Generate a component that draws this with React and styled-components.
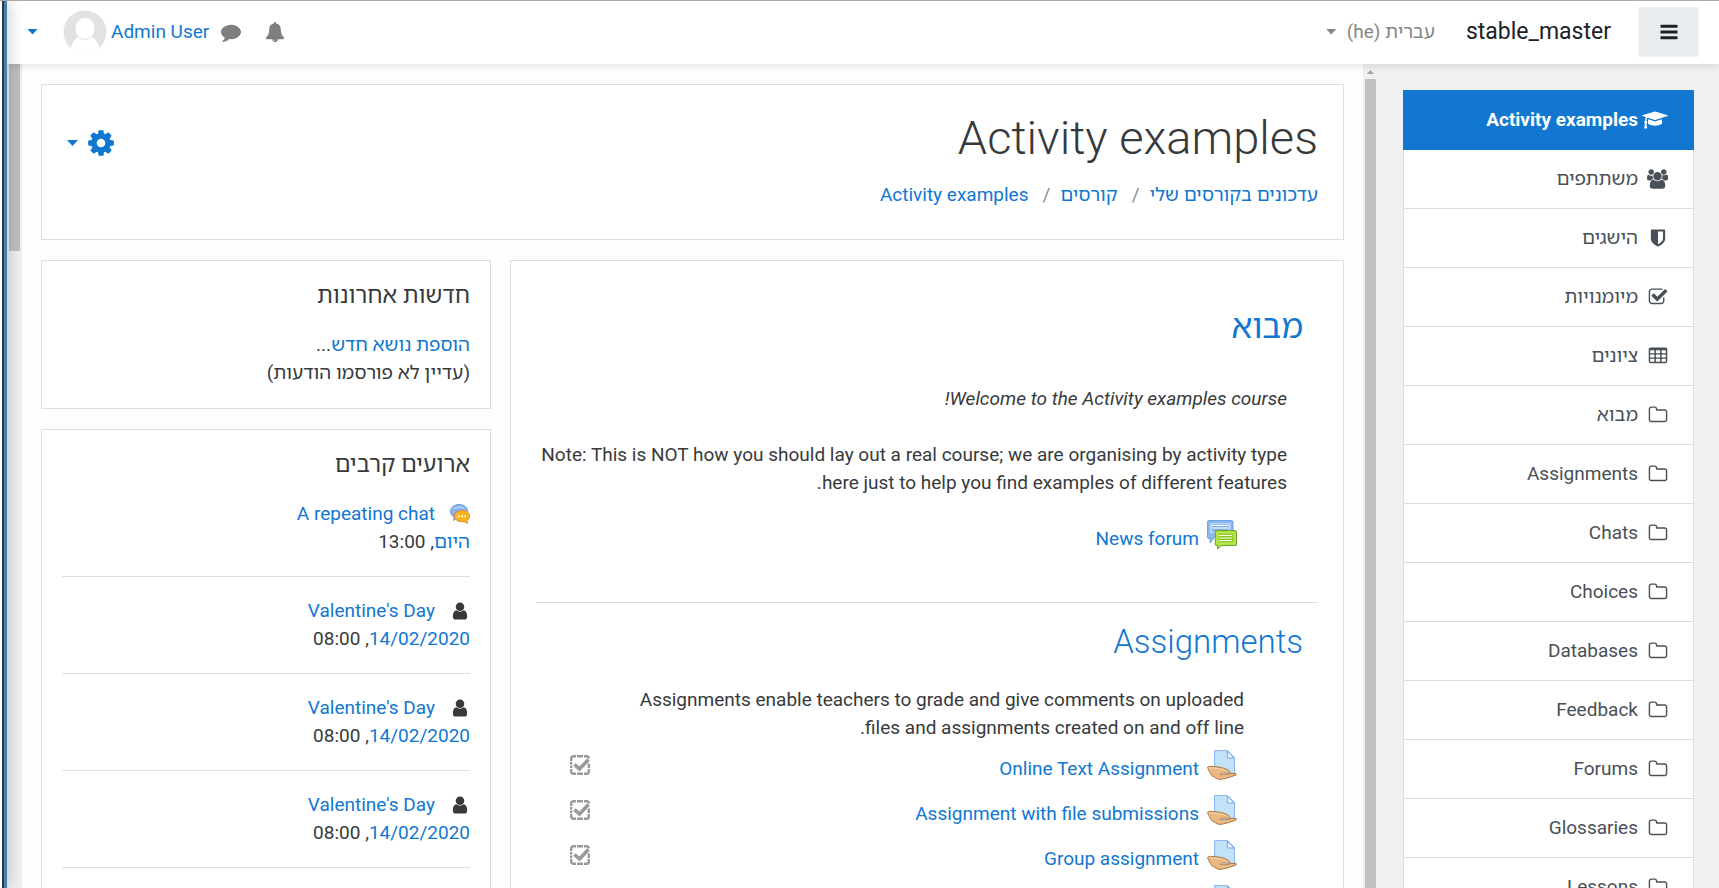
import React from "react";
import styled, { createGlobalStyle } from "styled-components";

const BLUE = "#1177d1";
const LINE = "#dddddd";

const GlobalStyle = createGlobalStyle`
  *, *::before, *::after { box-sizing: border-box; }
  body {
    margin: 0;
    background: #fefefe;
    color: #373a3c;
    font-family: Roboto, "Noto Sans", "Noto Sans Hebrew", "Liberation Sans", sans-serif;
    font-size: 19px;
    line-height: 28px;
  }
  h1, h2, h3, p, ul, ol { margin: 0; padding: 0; }
  ul, ol { list-style: none; }
  a { color: ${BLUE}; text-decoration: none; }
  button {
    border: 0;
    padding: 0;
    background: none;
    color: inherit;
    font: inherit;
    cursor: pointer;
  }
  svg { display: block; flex: none; }
`;

/* ---------- window shell ---------- */

const Window = styled.div`
  display: flex;
  height: 100vh;
  overflow: hidden;
  border-top: 1px solid #a9a9a9;
`;

const WindowEdge = styled.div`
  flex: none;
  width: 7px;
  z-index: 3;
  border-left: 2px solid #ffffff;
  border-right: 3px solid #4682b0;
  background: #35383a;
  box-shadow: 0 0 16px rgba(0, 0, 0, 0.35);
`;

const Page = styled.div`
  flex: 1;
  min-width: 0;
  display: flex;
  flex-direction: column;
`;

const Columns = styled.div`
  flex: 1;
  min-height: 0;
  display: flex;
`;

const ScrollTrack = styled.div`
  flex: none;
  width: 15px;
  padding: ${(p) => (p.$arrow ? "6px 2px 0" : "0 2px")};
  background: #f0f0f0;
`;

const ScrollArrow = styled.div`
  width: 7px;
  height: 4px;
  margin: 0 2px 5px;
  background: #a3a3a3;
  clip-path: polygon(50% 0, 100% 100%, 0 100%);
`;

const ScrollThumb = styled.div`
  height: ${(p) => p.$length};
  background: #c1c1c1;
`;

/* ---------- top bar ---------- */

const TopBar = styled.header`
  flex: none;
  display: flex;
  align-items: center;
  height: 63px;
  padding: 0 20px 2px;
  z-index: 2;
  background: #ffffff;
  box-shadow: 0 2px 8px rgba(0, 0, 0, 0.12);
`;

const DrawerToggle = styled.button`
  display: grid;
  place-items: center;
  width: 61px;
  height: 50px;
  border: 1px solid #f1f3f5;
  background: #e9ecef;
  color: #1d2125;
`;

const SiteName = styled.a`
  margin-right: 27px;
  color: #1d2125;
  font-size: 23px;
`;

const MenuButton = styled.button`
  display: flex;
  align-items: center;
  gap: ${(p) => p.$gap || "10px"};
  color: ${(p) => p.$color || BLUE};
`;

const LanguageButton = styled(MenuButton)`
  margin-right: 31px;
`;

const UserTools = styled.div`
  display: flex;
  align-items: center;
  margin-right: auto;
`;

const UserMenu = styled(MenuButton)`
  margin-right: 12px;
`;

const UserCaret = styled(MenuButton)`
  margin-right: 25px;
`;

const ToolButton = styled.button`
  margin-right: 24px;
  color: #7f7f7f;
`;

const UserName = styled.span`
  margin-left: 4px;
`;

const Caret = styled.span`
  width: 11px;
  height: 6px;
  background: currentColor;
  clip-path: polygon(0 0, 100% 0, 50% 100%);
`;

/* ---------- navigation drawer ---------- */

const Drawer = styled.aside`
  flex: none;
  width: 341px;
  padding: 26px 25px;
  overflow: hidden;
  background: #f1f1f1;
`;

const NavItem = styled.li`
  border: 1px solid ${(p) => (p.$active ? BLUE : LINE)};
  border-top-width: ${(p) => (p.$active ? "1px" : "0")};
  background: ${(p) => (p.$active ? BLUE : "#ffffff")};
`;

const NavLink = styled.a`
  display: flex;
  align-items: center;
  padding: 15px 25px;
  color: ${(p) => (p.$active ? "#ffffff" : "#495057")};
  font-weight: ${(p) => (p.$active ? 700 : 400)};
`;

const NavIcon = styled.span`
  display: flex;
  width: 20px;
  margin-left: 10px;
  justify-content: ${(p) => (p.$wide ? "flex-start" : "center")};
`;

/* ---------- content ---------- */

const Content = styled.main`
  flex: 1;
  min-width: 0;
  padding: 20px 19px 0;
  overflow: hidden;
`;

const Card = styled.section`
  border: 1px solid ${LINE};
  background: #ffffff;
`;

const HeaderCard = styled(Card)`
  display: flex;
  justify-content: space-between;
  align-items: flex-start;
  margin-bottom: 20px;
  padding: 25px 25px 30px;
`;

const PageTitle = styled.h1`
  margin-bottom: 15px;
  font-size: 47px;
  font-weight: 300;
  line-height: 56px;
`;

const Crumbs = styled.ol`
  display: flex;
`;

const Crumb = styled.li`
  &:not(:first-child)::before {
    content: "/";
    margin: 0 10px 0 14px;
    color: #868e96;
  }
`;

const SettingsButton = styled(MenuButton)`
  margin-top: 18px;
`;

const Split = styled.div`
  display: grid;
  grid-template-columns: minmax(0, 1fr) 450px;
  gap: 19px;
`;

const CourseCard = styled(Card)`
  padding: 46px 25px 0;
`;

const Topic = styled.section`
  padding: ${(p) => (p.$first ? "0 0 50px" : "19px 0 0")};
  border-top: ${(p) => (p.$first ? "0" : "1px solid #dadce4")};
`;

const TopicTitle = styled.h2`
  padding: 0 15px;
  font-size: 33px;
  font-weight: ${(p) => p.$weight || 300};
  line-height: 40px;
`;

const Summary = styled.div`
  padding: 38px 31px 23px 0;

  p + p { margin-top: 28px; }
`;

const Note = styled.p`
  padding: 24px 74px 8px 70px;
`;

const Activity = styled.li`
  display: flex;
  justify-content: space-between;
  align-items: flex-start;
  height: ${(p) => (p.$compact ? "32px" : "45px")};
  padding: 0 81px 0 34px;
`;

const ActivityLink = styled.a`
  display: flex;
  align-items: flex-start;
  gap: 8px;
`;

const ActivityName = styled.span`
  padding-top: 5px;
`;

const Completion = styled.button`
  padding-top: 5px;
  color: #999999;
`;

const Blocks = styled.div`
  display: flex;
  flex-direction: column;
  gap: 20px;
`;

const Block = styled(Card)`
  padding: 21px 20px;
`;

const BlockTitle = styled.h3`
  margin-bottom: 21px;
  font-size: 23px;
  font-weight: 400;
`;

const EventItem = styled.li`
  padding-bottom: 20px;
  border-bottom: 1px solid #e0e0e0;

  & + & { padding-top: 20px; }
`;

const EventLink = styled.a`
  display: flex;
  align-items: center;
  gap: 15px;
`;

const EventIcon = styled.span`
  color: #373a3c;
`;

/* ---------- icons ---------- */

const glyphs = {
  comment:
    "M1792 896q0 174-120 321.5t-326 233-450 85.5q-70 0-145-8-198 175-460 242-49 14-114 22-17 2-30.5-9t-17.5-29v-1q-3-4-.5-12t2-10 4.5-9.5l6-9 7-8.5 8-9q7-8 31-34.5t34.5-38 31-39.5 32.5-51 27-59 26-76q-157-89-247.5-220t-90.5-281q0-130 71-248.5t191-204.5 286-136.5 348-50.5q244 0 450 85.5t326 233 120 321.5z",
  bell:
    "M912 1696q0-16-16-16-59 0-101.5-42.5t-42.5-101.5q0-16-16-16t-16 16q0 73 51.5 124.5t124.5 51.5q16 0 16-16zm816-288q0 52-38 90t-90 38h-448q0 106-75 181t-181 75-181-75-75-181h-448q-52 0-90-38t-38-90q50-42 91-88t85-119.5 74.5-158.5 50-206 19.5-260q0-152 117-282.5t307-158.5q-8-19-8-39 0-40 28-68t68-28 68 28 28 68q0 20-8 39 190 28 307 158.5t117 282.5q0 139 19.5 260t50 206 74.5 158.5 85 119.5 91 88z",
  cog:
    "M1152 896q0-106-75-181t-181-75-181 75-75 181 75 181 181 75 181-75 75-181zm512-109v222q0 12-8 23t-20 13l-185 28q-19 54-39 91 35 50 107 138 10 12 10 25t-9 23q-27 37-99 108t-94 71q-12 0-26-9l-138-108q-44 23-91 38-16 136-29 186-7 28-36 28h-222q-14 0-24.5-8.5t-11.5-21.5l-28-184q-49-16-90-37l-141 107q-10 9-25 9-14 0-25-11-126-114-165-168-7-10-7-23 0-12 8-23 15-21 51-66.5t54-70.5q-27-50-41-99l-183-27q-13-2-21-12.5t-8-23.5v-222q0-12 8-23t19-13l186-28q14-46 39-92-40-57-107-138-10-12-10-24 0-10 9-23 26-36 98.5-107.5t94.5-71.5q13 0 26 10l138 107q44-23 91-38 16-136 29-186 7-28 36-28h222q14 0 24.5 8.5t11.5 21.5l28 184q49 16 90 37l142-107q9-9 24-9 13 0 25 10 129 119 165 170 7 8 7 22 0 12-8 23-15 21-51 66.5t-54 70.5q26 50 41 98l183 28q13 2 21 12.5t8 23.5z",
  user:
    "M1536 1399q0 109-62.5 187t-150.5 78h-854q-88 0-150.5-78t-62.5-187q0-85 8.5-160.5t31.5-152 58.5-131 94-89 134.5-34.5q131 128 313 128t313-128q76 0 134.5 34.5t94 89 58.5 131 31.5 152 8.5 160.5zm-256-887q0 159-112.5 271.5t-271.5 112.5-271.5-112.5-112.5-271.5 112.5-271.5 271.5-112.5 271.5 112.5 112.5 271.5z",
  folder:
    "M1600 1312v-704q0-40-28-68t-68-28h-704q-40 0-68-28t-28-68v-64q0-40-28-68t-68-28h-320q-40 0-68 28t-28 68v960q0 40 28 68t68 28h1216q40 0 68-28t28-68zm128-704v704q0 92-66 158t-158 66h-1216q-92 0-158-66t-66-158v-960q0-92 66-158t158-66h320q92 0 158 66t66 158v32h672q92 0 158 66t66 158z",
  bars:
    "M1664 1344v128q0 26-19 45t-45 19h-1408q-26 0-45-19t-19-45v-128q0-26 19-45t45-19h1408q26 0 45 19t19 45zm0-512v128q0 26-19 45t-45 19h-1408q-26 0-45-19t-19-45v-128q0-26 19-45t45-19h1408q26 0 45 19t19 45zm0-512v128q0 26-19 45t-45 19h-1408q-26 0-45-19t-19-45v-128q0-26 19-45t45-19h1408q26 0 45 19t19 45z",
  check:
    "M1472 930v318q0 119-84.5 203.5t-203.5 84.5h-832q-119 0-203.5-84.5t-84.5-203.5v-832q0-119 84.5-203.5t203.5-84.5h832q63 0 117 25 15 7 18 23 3 17-9 29l-49 49q-10 10-23 10-3 0-9-2-23-6-45-6h-832q-66 0-113 47t-47 113v832q0 66 47 113t113 47h832q66 0 113-47t47-113v-254q0-13 9-22l64-64q10-10 23-10 6 0 12 3 20 8 20 29zm231-489l-814 814q-24 24-57 24t-57-24l-430-430q-24-24-24-57t24-57l110-110q24-24 57-24t57 24l263 263 647-647q24-24 57-24t57 24l110 110q24 24 24 57t-24 57z",
  shield:
    "M1344 960v-640h-448v1137q119-63 213-137 235-184 235-360zm192-768v768q0 86-33.5 170.5t-83 150-118 127.5-126.5 103-121 77.5-89.5 49.5-42.5 20q-12 6-26 6t-26-6q-16-7-42.5-20t-89.5-49.5-121-77.5-126.5-103-118-127.5-83-150-33.5-170.5v-768q0-26 19-45t45-19h1152q26 0 45 19t19 45z",
  table:
    "M224 128h1344q66 0 113 47t47 113v1088q0 66-47 113t-113 47h-1344q-66 0-113-47t-47-113v-1088q0-66 47-113t113-47zM192 416v192q0 32 32 32h320q32 0 32-32v-192q0-32-32-32h-320q-32 0-32 32zM704 416v192q0 32 32 32h320q32 0 32-32v-192q0-32-32-32h-320q-32 0-32 32zM1216 416v192q0 32 32 32h320q32 0 32-32v-192q0-32-32-32h-320q-32 0-32 32zM192 800v192q0 32 32 32h320q32 0 32-32v-192q0-32-32-32h-320q-32 0-32 32zM704 800v192q0 32 32 32h320q32 0 32-32v-192q0-32-32-32h-320q-32 0-32 32zM1216 800v192q0 32 32 32h320q32 0 32-32v-192q0-32-32-32h-320q-32 0-32 32zM192 1184v192q0 32 32 32h320q32 0 32-32v-192q0-32-32-32h-320q-32 0-32 32zM704 1184v192q0 32 32 32h320q32 0 32-32v-192q0-32-32-32h-320q-32 0-32 32zM1216 1184v192q0 32 32 32h320q32 0 32-32v-192q0-32-32-32h-320q-32 0-32 32z",
  cap:
    "M1774 836l18 316q4 69-82 128t-235 93.5-323 34.5-323-34.5-235-93.5-82-128l18-316 574 181q22 7 48 7t48-7zm530-324q0 23-22 31l-1120 352q-4 1-10 1t-10-1l-652-206q-43 34-71 111.5t-34 178.5q63 36 63 109 0 69-58 107l58 433q2 14-8 25-9 11-24 11h-192q-15 0-24-11-10-11-8-25l58-433q-58-38-58-107 0-73 65-111 11-207 98-330l-333-104q-22-8-22-31t22-31l1120-352q4-1 10-1t10 1l1120 352q22 8 22 31z",
  users:
    "M593 896q-162 5-265 128h-134q-82 0-138-40.5t-56-118.5q0-353 124-353 6 0 43.5 21t97.5 42.5 119 21.5q67 0 133-23-5 37-5 66 0 159 93 293zm1071 637q0 120-73 189.5t-194 69.5h-874q-121 0-194-69.5t-73-189.5q0-53 3.5-103.5t14-109 26.5-108.5 43-97.5 62-81 85.5-53.5 111.5-20q10 0 43 21.5t73 48 107 48 135 21.5 135-21.5 107-48 73-48 43-21.5q61 0 111.5 20t85.5 53.5 62 81 43 97.5 26.5 108.5 14 109 3.5 103.5zm-1024-1277q0 106-75 181t-181 75-181-75-75-181 75-181 181-75 181 75 75 181zm704 384q0 159-112.5 271.5t-271.5 112.5-271.5-112.5-112.5-271.5 112.5-271.5 271.5-112.5 271.5 112.5 112.5 271.5zm576 225q0 78-56 118.5t-138 40.5h-134q-103-123-265-128 93-134 93-293 0-29-5-66 66 23 133 23 59 0 119-21.5t97.5-42.5 43.5-21q124 0 124 353zm-128-609q0 106-75 181t-181 75-181-75-75-181 75-181 181-75 181 75 75 181z",
};

const glyphWidths = { cap: 2304, users: 1920 };

function Glyph({ name, size = 20 }) {
  const width = glyphWidths[name] || 1792;
  return (
    <svg
      viewBox={`0 0 ${width} 1792`}
      width={Math.round((size * width) / 1792)}
      height={size}
      fill="currentColor"
      fillRule={name === "table" ? "evenodd" : "nonzero"}
      aria-hidden="true"
    >
      <path d={glyphs[name]} />
    </svg>
  );
}

function Avatar() {
  return (
    <svg width="44" height="44" viewBox="0 0 44 44" aria-hidden="true">
      <defs>
        <clipPath id="avatar-disc">
          <circle cx="22" cy="22" r="21.5" />
        </clipPath>
      </defs>
      <g clipPath="url(#avatar-disc)">
        <rect width="44" height="44" fill="#e2e2e2" />
        <path d="M7 44c0-9 4-16 10-18h10c6 2 10 9 10 18z" fill="#ffffff" />
        <ellipse cx="22" cy="18.5" rx="10" ry="11" fill="#ffffff" stroke="#e2e2e2" />
      </g>
    </svg>
  );
}

function ChatIcon() {
  return (
    <svg width="20" height="20" viewBox="0 0 20 20" aria-hidden="true">
      <path d="M9 .5c5 0 8.600 3 8.600 7s-3.600 7-8.600 7c-.8 0-1.600 0-2.300-.2L3.500 16.500l.6-3.300C2 11.900.5 10 .5 7.500c0-4 3.500-7 8.500-7z" fill="#86b0ee" stroke="#6f9be0" />
      <path d="M2.500 5.500C4 2.500 7 1.800 9.500 1.900c3 .1 5.500 1.600 6.300 3.600-4-1.500-8-1.500-13.300 0z" fill="#aac9f6" />
      <path d="M12 6.500c4.400 0 7.500 2.400 7.500 5.600 0 2-1.100 3.600-2.700 4.500l.8 2.900-3.500-2c-.6.100-1.300.2-2.100.2-4.400 0-7.500-2.400-7.500-5.600s3.100-5.600 7.500-5.600z" fill="#fbb41f" stroke="#e8872e" />
      <circle cx="8.800" cy="12.200" r="1" fill="#fff" />
      <circle cx="12" cy="12.200" r="1" fill="#fff" />
      <circle cx="15.200" cy="12.200" r="1" fill="#fff" />
    </svg>
  );
}

function ForumIcon() {
  return (
    <svg width="30" height="30" viewBox="0 0 30 30" aria-hidden="true">
      <path d="M2 .6h22.500a1.500 1.500 0 0 1 1.500 1.500V16H8.200L3.200 23v-4.500H2A1.400 1.400 0 0 1 .6 17V2A1.400 1.400 0 0 1 2 .6z" fill="#8db8f2" stroke="#6a9ce6" />
      <path d="M3 3h20.500v10H3z" fill="#b9d6fa" />
      <path d="M5 4.500h16.500v7H5z" fill="#86b2ee" />
      <path d="M5 5.500h16M5 8h16" stroke="#fff" />
      <path d="M9.600 10.600h18.400a1.500 1.500 0 0 1 1.500 1.500v12a1.500 1.500 0 0 1-1.500 1.500H14L10.600 29v-3.400h-1A1.500 1.500 0 0 1 8.200 24V12a1.400 1.400 0 0 1 1.400-1.400z" fill="#a3dd2f" stroke="#6f9f2f" />
      <path d="M10 12.300h17.800v11.500H10z" fill="none" stroke="#c5ee68" />
      <path d="M12 14.500h13.500v7H12z" fill="#86c71a" />
      <path d="M12 15.500h13M12 18h13M12 20.500h13" stroke="#fff" />
    </svg>
  );
}

function AssignIcon() {
  return (
    <svg width="30" height="30" viewBox="0 0 30 30" aria-hidden="true">
      <path d="M7.600.6h12.900l7 7v17.900H7.600z" fill="#c6e3f6" stroke="#86b3f2" />
      <path d="M9 2h10v6.500h7V24H9z" fill="#c2e2f7" />
      <path d="M20.300 1v7h7z" fill="#eaf4fd" stroke="#79a7ee" />
      <path d="M.5 17.300l2.800-1c6 .2 12 1 17.200 3.400 2 .9 2.600 2.600 1.800 3.400l6.900.6c.6.400.2 1.100-.6 1.500l-9 3-5.800 1.200-3-.3-6-3.500C3.500 23.500 1.500 20.500.5 17.300z" fill="#eab983" stroke="#ad7747" />
      <path d="M2 18c6-.5 11.500.8 17 2.600" fill="none" stroke="#f6d5ab" />
      <path d="M22.300 24.500h-9.500c1-1.200 2.300-1.700 4-1.500l6 .4z" fill="#c6e3f6" stroke="#a87449" strokeWidth=".7" />
    </svg>
  );
}

function CompletionIcon() {
  return (
    <svg width="20" height="20" viewBox="0 0 20 20" fill="none" stroke="currentColor" aria-hidden="true">
      <path
        d="M1.200 6V3.500q0-2.300 2.300-2.300H6M14 1.200h2.500q2.300 0 2.300 2.300M18.800 14v2.500q0 2.300-2.300 2.300h-2.500M6 18.800h-2.500q-2.300 0-2.300-2.300v-2.500M7 1.200h6M7 18.800h6M1.200 7v2.500M1.200 10.500v2.500M18.800 8.500v4.500"
        strokeWidth="2.400"
      />
      <path d="M4.500 9.500l5 4.500 9-9.500" strokeWidth="3.600" />
    </svg>
  );
}

/* ---------- data ---------- */

const navItems = [
  ["cap", "Activity examples"],
  ["users", "משתתפים"],
  ["shield", "הישגים"],
  ["check", "מיומנויות"],
  ["table", "ציונים"],
  ["folder", "מבוא"],
  ["folder", "Assignments"],
  ["folder", "Chats"],
  ["folder", "Choices"],
  ["folder", "Databases"],
  ["folder", "Feedback"],
  ["folder", "Forums"],
  ["folder", "Glossaries"],
  ["folder", "Lessons"],
];

const crumbs = ["עדכונים בקורסים שלי", "קורסים", "Activity examples"];

const assignments = [
  "Online Text Assignment",
  "Assignment with file submissions",
  "Group assignment",
  "",
];

const events = [
  { icon: "chat", name: "A repeating chat", day: "היום", time: "13:00" },
  { icon: "user", name: "Valentine's Day", day: "14/02/2020", time: "08:00" },
  { icon: "user", name: "Valentine's Day", day: "14/02/2020", time: "08:00" },
  { icon: "user", name: "Valentine's Day", day: "14/02/2020", time: "08:00" },
];

export default function App() {
  return (
    <Window dir="rtl" lang="he">
      <GlobalStyle />
      <Page>
        <TopBar>
          <DrawerToggle aria-label="תפריט צד">
            <Glyph name="bars" />
          </DrawerToggle>
          <SiteName href="#home">stable_master</SiteName>
          <LanguageButton $color="#868686">
            <span>עברית &lrm;(he)&lrm;</span>
            <Caret />
          </LanguageButton>
          <UserTools>
            <ToolButton aria-label="התראות">
              <Glyph name="bell" />
            </ToolButton>
            <ToolButton aria-label="מסרים">
              <Glyph name="comment" />
            </ToolButton>
            <UserMenu $gap="0">
              <UserName>Admin User</UserName>
              <Avatar />
            </UserMenu>
            <UserCaret aria-label="תפריט משתמש">
              <Caret />
            </UserCaret>
          </UserTools>
        </TopBar>

        <Columns>
          <Drawer>
            <nav>
              <ul>
                {navItems.map(([icon, label], i) => (
                  <NavItem key={label} $active={i === 0}>
                    <NavLink href="#nav" $active={i === 0}>
                      <NavIcon $wide={icon in glyphWidths}>
                        <Glyph name={icon} />
                      </NavIcon>
                      {label}
                    </NavLink>
                  </NavItem>
                ))}
              </ul>
            </nav>
          </Drawer>
          <ScrollTrack $arrow aria-hidden="true">
            <ScrollArrow />
            <ScrollThumb $length="100%" />
          </ScrollTrack>

          <Content>
            <HeaderCard as="header">
              <div>
                <PageTitle>Activity examples</PageTitle>
                <nav>
                  <Crumbs>
                    {crumbs.map((name) => (
                      <Crumb key={name}>
                        <a href="#crumb">{name}</a>
                      </Crumb>
                    ))}
                  </Crumbs>
                </nav>
              </div>
              <SettingsButton $gap="8px" aria-label="הגדרות">
                <Glyph name="cog" size={30} />
                <Caret />
              </SettingsButton>
            </HeaderCard>

            <Split>
              <CourseCard>
                <Topic $first>
                  <TopicTitle $weight={400}>
                    <a href="#intro">מבוא</a>
                  </TopicTitle>
                  <Summary>
                    <p>
                      <em>Welcome to the Activity examples course!</em>
                    </p>
                    <p>
                      Note: This is NOT how you should lay out a real course; we are organising by
                      activity type here just to help you find examples of different features.
                    </p>
                  </Summary>
                  <ul>
                    <Activity $compact>
                      <ActivityLink href="#forum">
                        <ForumIcon />
                        <ActivityName>News forum</ActivityName>
                      </ActivityLink>
                    </Activity>
                  </ul>
                </Topic>
                <Topic>
                  <TopicTitle>
                    <a href="#assignments">Assignments</a>
                  </TopicTitle>
                  <Note>
                    Assignments enable teachers to grade and give comments on uploaded files and
                    assignments created on and off line.
                  </Note>
                  <ul>
                    {assignments.map((name) => (
                      <Activity key={name}>
                        <ActivityLink href="#assign">
                          <AssignIcon />
                          <ActivityName>{name}</ActivityName>
                        </ActivityLink>
                        <Completion aria-label="השלמת פעילות">
                          <CompletionIcon />
                        </Completion>
                      </Activity>
                    ))}
                  </ul>
                </Topic>
              </CourseCard>

              <Blocks>
                <Block>
                  <BlockTitle>חדשות אחרונות</BlockTitle>
                  <div>
                    <a href="#add">הוספת נושא חדש</a>...
                  </div>
                  <div>(עדיין לא פורסמו הודעות)</div>
                </Block>
                <Block>
                  <BlockTitle>ארועים קרבים</BlockTitle>
                  <ul>
                    {events.map((event, i) => (
                      <EventItem key={i}>
                        <EventLink href="#event">
                          <EventIcon>
                            {event.icon === "chat" ? <ChatIcon /> : <Glyph name="user" />}
                          </EventIcon>
                          {event.name}
                        </EventLink>
                        <div>
                          <a href="#day">{event.day}</a>, {event.time}
                        </div>
                      </EventItem>
                    ))}
                  </ul>
                </Block>
              </Blocks>
            </Split>
          </Content>

          <ScrollTrack aria-hidden="true">
            <ScrollThumb $length="187px" />
          </ScrollTrack>
        </Columns>
      </Page>
      <WindowEdge aria-hidden="true" />
    </Window>
  );
}
